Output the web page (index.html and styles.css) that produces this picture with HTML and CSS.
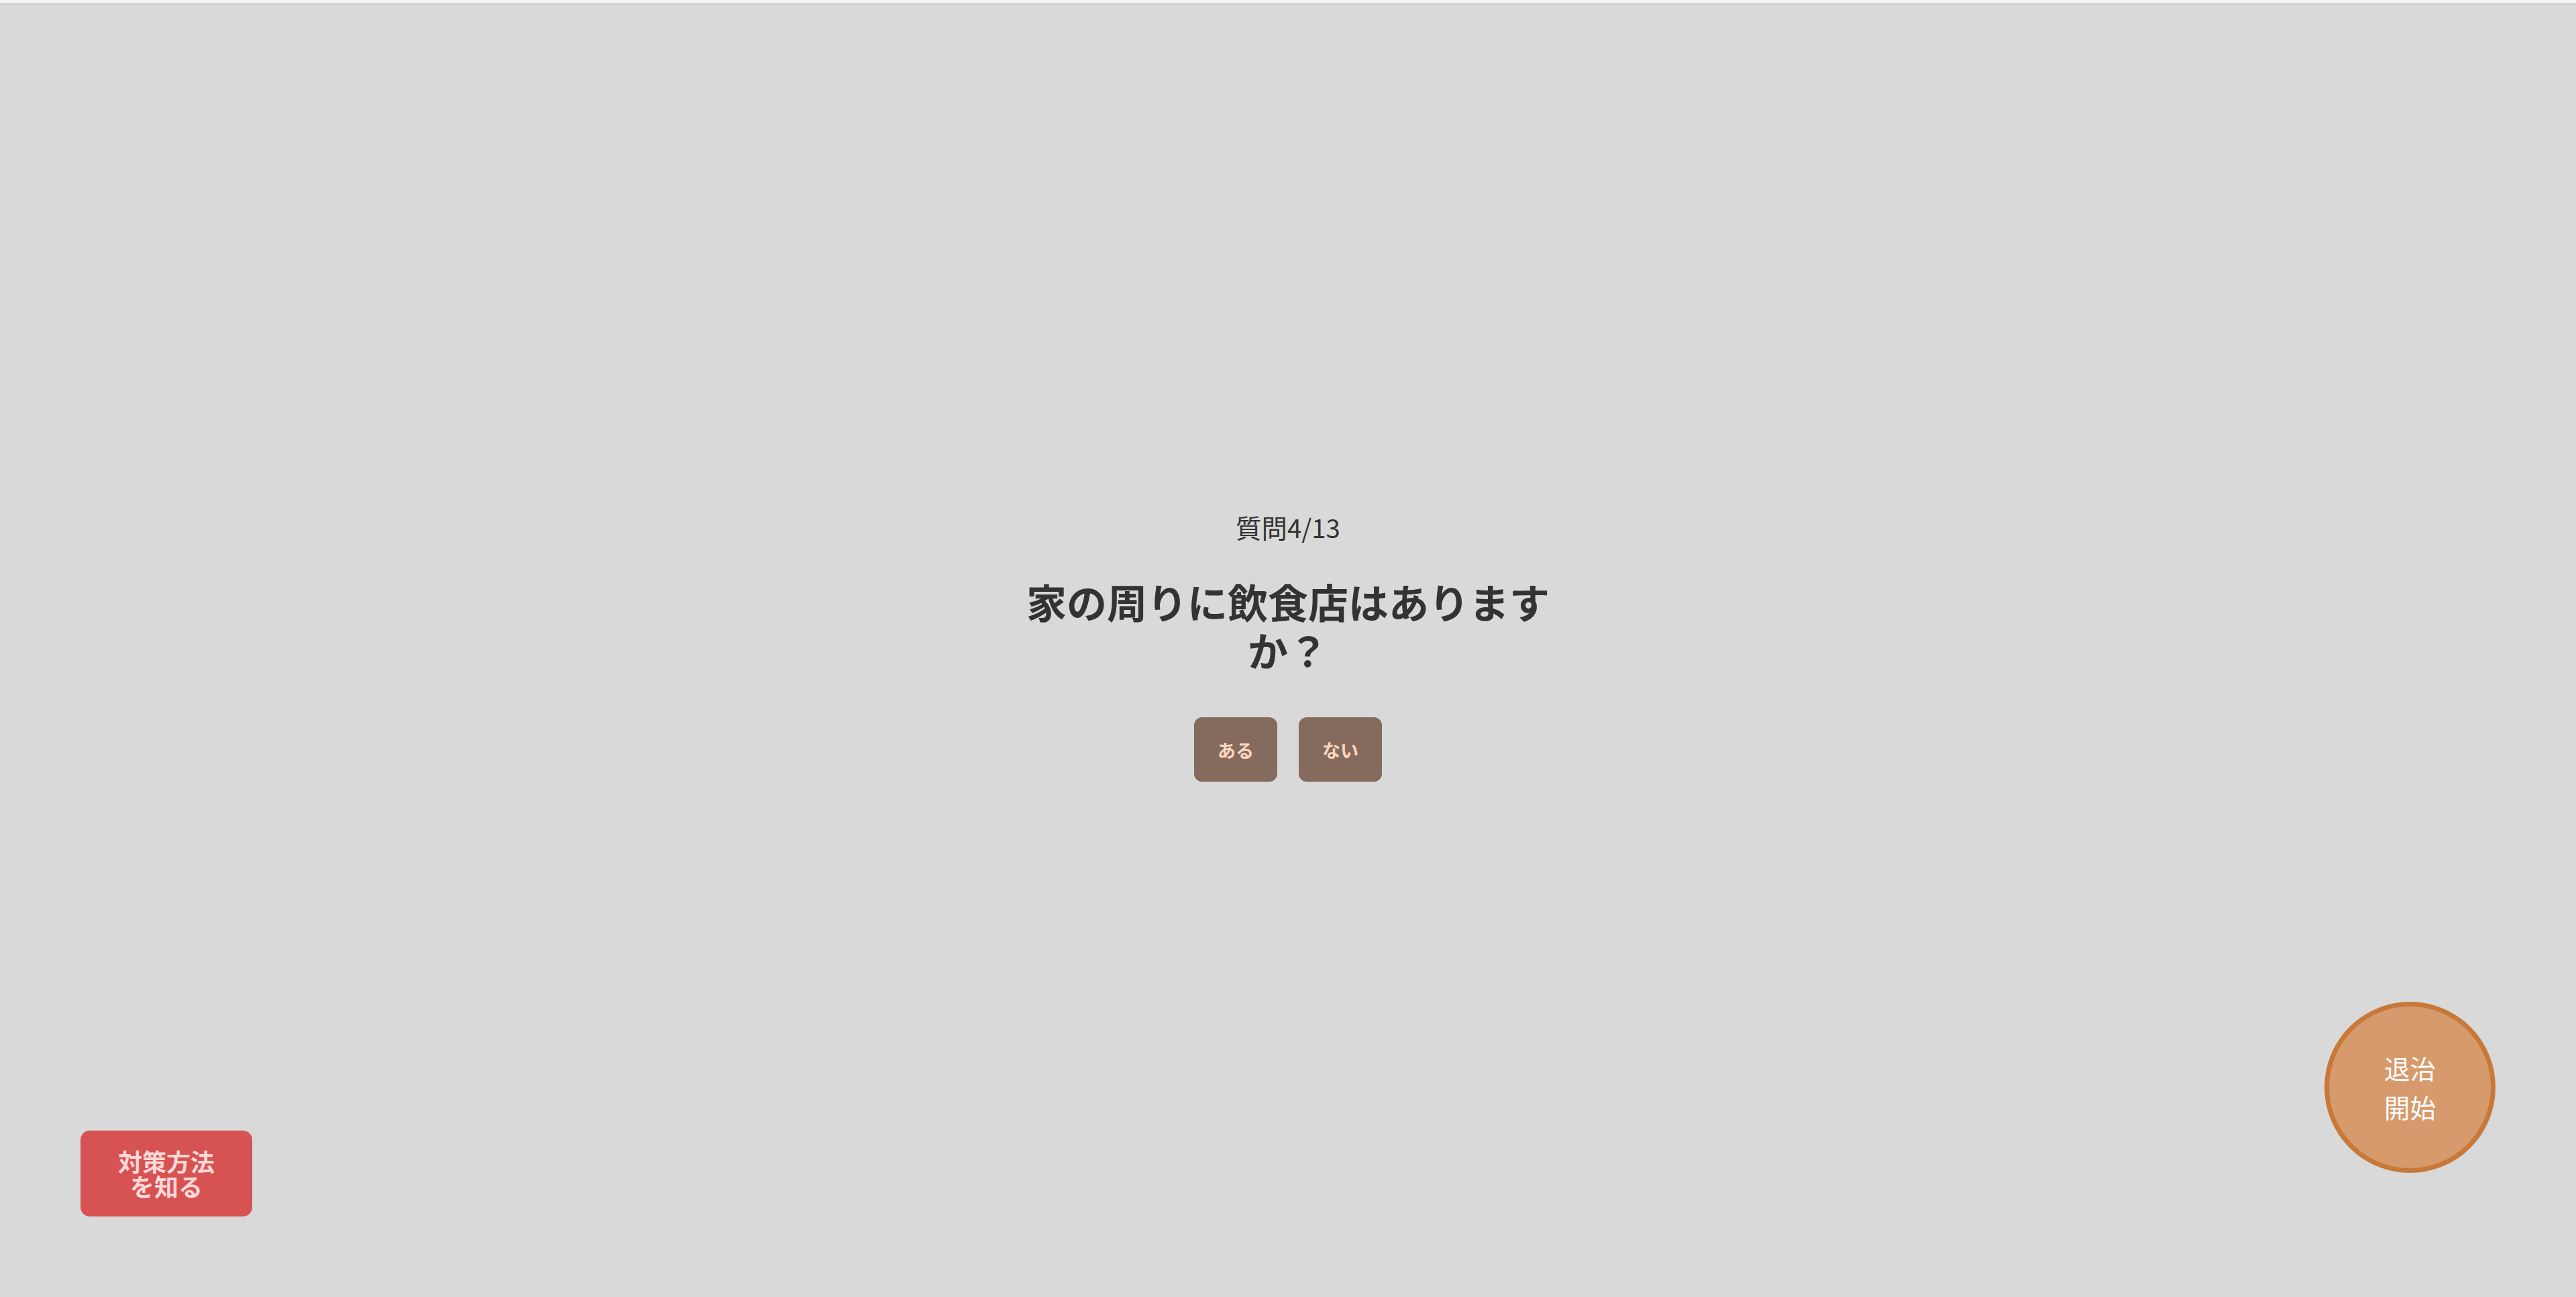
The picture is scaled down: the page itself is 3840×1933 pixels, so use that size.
FILE: index.html
```html
<!DOCTYPE html>
<html lang="ja">
<head>
<meta charset="utf-8">
<title>質問</title>
<link rel="stylesheet" href="styles.css">
</head>
<body>
<div class="topbar"></div>
<main class="quiz">
  <p class="counter">質問4/13</p>
  <h2 class="question">家の周りに飲食店はありますか？</h2>
  <div class="answers">
    <button class="answer">ある</button>
    <button class="answer">ない</button>
  </div>
</main>
<button class="tips">対策方法<br>を知る</button>
<button class="start">退治<br>開始</button>
</body>
</html>
```

FILE: styles.css
```css
html, body {
  margin: 0;
  padding: 0;
}
body {
  background: #d9d9d9;
  font-family: "Noto Sans CJK JP", "Noto Sans", sans-serif;
  color: #333333;
  height: 1933px;
  overflow: hidden;
}
.topbar {
  height: 5px;
  background: #f4f4f4;
  border-bottom: 2px solid #cbcbcb;
}
.quiz {
  height: 1926px;
  box-sizing: border-box;
  padding-bottom: 18px;
  display: flex;
  flex-direction: column;
  align-items: center;
  justify-content: center;
}
.counter {
  margin: 0;
  font-size: 38.4px;
  line-height: 57.6px;
  color: #333333;
}
.question {
  margin: 46px 0 0;
  width: 800px;
  text-align: center;
  font-size: 60px;
  line-height: 72px;
  font-weight: 700;
  color: #333333;
}
.answers {
  margin-top: 65px;
  display: flex;
  gap: 32px;
}
.answer {
  width: 124px;
  height: 96px;
  border: none;
  border-radius: 12px;
  background: #846b5d;
  color: #ffd6c0;
  font-family: "Noto Sans CJK JP", sans-serif;
  font-weight: 700;
  font-size: 27px;
  padding: 0;
}
.tips {
  position: fixed;
  left: 120px;
  bottom: 120px;
  width: 256px;
  height: 128px;
  border: none;
  border-radius: 14px;
  background: #d75252;
  color: #ffd8d8;
  font-family: "Noto Sans CJK JP", sans-serif;
  font-weight: 700;
  font-size: 36px;
  line-height: 37px;
  padding: 0;
}
.start {
  position: fixed;
  right: 120px;
  bottom: 185px;
  width: 255px;
  height: 255px;
  box-sizing: border-box;
  border: 7px solid #c87838;
  border-radius: 50%;
  background: #d69a6c;
  color: #ffffff;
  font-family: "Noto Sans CJK JP", sans-serif;
  font-size: 38.4px;
  line-height: 57.6px;
  padding: 0;
}
```
